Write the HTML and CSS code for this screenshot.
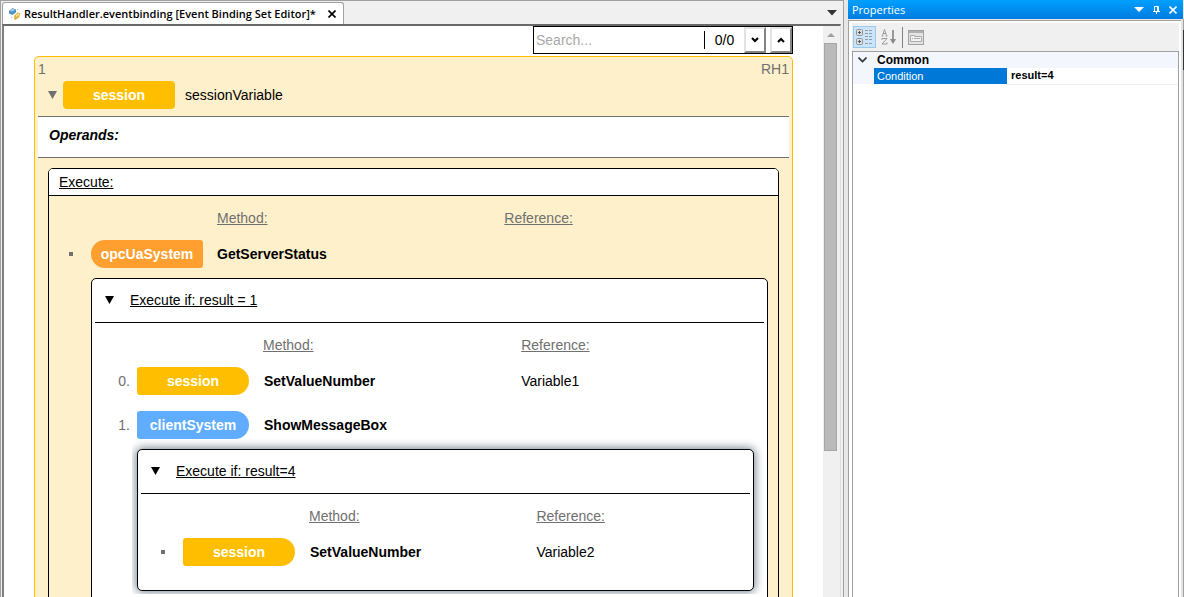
FILE: index.html
```html
<!DOCTYPE html>
<html lang="en">
<head>
<meta charset="utf-8">
<title>ResultHandler.eventbinding</title>
<link rel="stylesheet" href="styles.css">
</head>
<body>
<div class="workspace">
  <main class="editor">
    <div class="tabstrip">
      <div class="tab">
        <svg class="tab-icon" width="12" height="12" viewBox="0 0 12 12"><path d="M0 3l3.500-3L7 1.500v3L3.500 7 0 5.500z" fill="#4f93c9"/><path d="M1 2.500L3.500.5l2.500 1-2.500 2z" fill="#a9cdea"/><path d="M5.500 7l2-1V4.500l3.500.5-.5 4-4 3-1.500-1z" fill="#e3b23c"/><path d="M7 7l3-1.500v1.500L7 9z" fill="#fae69a"/><path d="M8 1l1 1M2 9l1 1" stroke="#b8b8b8"/></svg>
        <span class="tab-title">ResultHandler.eventbinding [Event Binding Set Editor]*</span>
        <button class="plain" aria-label="Close tab"><svg width="8" height="8" viewBox="0 0 8 8"><path d="M.5.5l7 7M7.500.5l-7 7" stroke="#000" stroke-width="1.600"/></svg></button>
      </div>
      <button class="plain tab-menu" aria-label="Open documents"><svg width="10" height="6" viewBox="0 0 10 6"><path d="M0 0h10L5 5.500z" fill="#333"/></svg></button>
    </div>
    <div class="viewport">
      <div class="canvas">
        <div class="search">
          <input class="search-box" type="text" placeholder="Search..." aria-label="Search">
          <span class="search-count">0/0</span>
          <button class="search-btn" aria-label="Next match"><svg width="8" height="6" viewBox="0 0 8 6"><path d="M1 1l3 3 3-3" fill="none" stroke="#000" stroke-width="2"/></svg></button>
          <button class="search-btn" aria-label="Previous match"><svg width="8" height="6" viewBox="0 0 8 6"><path d="M1 5l3-3 3 3" fill="none" stroke="#000" stroke-width="2"/></svg></button>
        </div>
        <section class="card">
          <div class="card-ids"><span>1</span><span>RH1</span></div>
          <div class="card-head">
            <svg width="9" height="8" viewBox="0 0 9 8"><path d="M0 0h9L4.500 8z" fill="#707070"/></svg>
            <span class="pill session">session</span>
            <span>sessionVariable</span>
          </div>
          <div class="operands">Operands:</div>
          <div class="box outer">
            <div class="outer-title"><span class="under">Execute:</span></div>
            <div class="grid outer-grid">
              <span class="label method">Method:</span><span class="label">Reference:</span>
              <span class="dot"></span><span class="pill opc">opcUaSystem</span><b class="name">GetServerStatus</b><span></span>
            </div>
            <div class="box inner">
              <div class="box-title"><svg width="9" height="8" viewBox="0 0 9 8"><path d="M0 0h9L4.500 8z"/></svg><span class="under">Execute if: result = 1</span></div>
              <div class="grid">
                <span class="label method">Method:</span><span class="label">Reference:</span>
                <span class="index">0.</span><span class="pill session right">session</span><b class="name">SetValueNumber</b><span>Variable1</span>
                <span class="index">1.</span><span class="pill client right">clientSystem</span><b class="name">ShowMessageBox</b><span></span>
              </div>
              <div class="selection">
                <div class="box selected">
                  <div class="box-title"><svg width="9" height="8" viewBox="0 0 9 8"><path d="M0 0h9L4.500 8z"/></svg><span class="under">Execute if: result=4</span></div>
                  <div class="grid">
                    <span class="label method">Method:</span><span class="label">Reference:</span>
                    <span class="dot"></span><span class="pill session right">session</span><b class="name">SetValueNumber</b><span>Variable2</span>
                  </div>
                </div>
              </div>
            </div>
          </div>
        </section>
      </div>
      <div class="scrollbar">
        <svg width="8" height="4" viewBox="0 0 8 4"><path d="M0 4l4-4 4 4z" fill="#a0a0a0"/></svg>
        <div class="thumb"></div>
      </div>
    </div>
  </main>
  <aside class="properties">
    <div class="titlebar">
      <span class="titlebar-text">Properties</span>
      <button class="plain" aria-label="Panel menu"><svg width="10" height="6" viewBox="0 0 10 6"><path d="M0 0h10L5 5z" fill="#fff"/></svg></button>
      <button class="plain" aria-label="Pin"><svg width="7" height="8" viewBox="0 0 7 8"><path d="M1.500 5V.5h4V5M0 5.500h7M3.500 5.500V8M4.500 1v4" fill="none" stroke="#fff"/></svg></button>
      <button class="plain" aria-label="Close"><svg width="8" height="8" viewBox="0 0 8 8"><path d="M.5.5l7 7M7.500.5l-7 7" stroke="#fff" stroke-width="1.600"/></svg></button>
    </div>
    <div class="panel">
      <div class="toolbar">
        <button class="tool active" aria-label="Categorized"><svg width="17" height="16" viewBox="0 0 17 16"><g fill="#ddd" stroke="#8b98a3"><rect x=".5" y=".5" width="6" height="6" rx="1"/><rect x=".5" y="9.500" width="6" height="6" rx="1"/></g><path d="M2 3.500h3M3.500 2v3M2 12.500h3M3.500 11v3" stroke="#555"/><path d="M9 1.500h3M13 1.500h3M9 4.500h3M13 4.500h3M9 7.500h3M13 7.500h3M9 10.500h3M13 10.500h3M9 14.500h3M13 14.500h3" stroke="#929da6"/></svg></button>
        <button class="tool" aria-label="Alphabetical"><svg width="16" height="16" viewBox="0 0 16 16"><path d="M.5 7h2M4.500 7h2M1.500 6.500l2-6 2 6M2 4.500h3M1 11V9.500h5L1 15h5v-1.500" fill="none" stroke="#9a9a9a"/><path d="M12 1v11" stroke="#999" stroke-width="2"/><path d="M9 10l3 5 3-5z" fill="#888"/></svg></button>
        <span class="tool-rule"></span>
        <button class="tool" aria-label="Property pages"><svg width="16" height="15" viewBox="0 0 16 15"><rect x=".5" y=".5" width="15" height="14" fill="#e4e4e4" stroke="#a0a0a0"/><path d="M1 2h14" stroke="#b0b0b0" stroke-width="2"/><path d="M2.500 11.500v-6h4v1h7v5z" fill="#f3f3f3" stroke="#aaa"/><path d="M4 8.500h1M6 8.500h6" stroke="#aaa"/></svg></button>
      </div>
      <div class="sheet">
        <table class="props">
          <colgroup><col class="col-gutter"><col class="col-key"><col></colgroup>
          <tr class="group"><td class="gutter"><svg width="9" height="6" viewBox="0 0 9 6"><path d="M.5.5l4 4 4-4" fill="none" stroke="#333" stroke-width="1.600"/></svg></td><th colspan="2" scope="colgroup">Common</th></tr>
          <tr class="prop"><td class="gutter"></td><th class="key" scope="row">Condition</th><td class="value">result=4</td></tr>
        </table>
      </div>
    </div>
    <div class="edge"></div>
  </aside>
</div>
</body>
</html>
```

FILE: styles.css
```css
* { box-sizing: border-box; }
body { margin: 0; background: #e7e7e7; color: #000; font: 14px/20px "Liberation Sans", Arial, sans-serif; }
svg { display: block; flex: none; }
button, input { font: inherit; color: inherit; margin: 0; }
.plain { border: 0; padding: 0; background: none; }
.workspace { display: flex; height: 100vh; overflow: hidden; gap: 4px; }

.editor { flex: 1; min-width: 0; display: flex; flex-direction: column; background: #f0f0f0; border: 1px solid #a0a0a0; border-bottom: 0; }
.tabstrip { display: flex; justify-content: space-between; align-items: center; height: 23px; padding: 1px 6px 0 1px; }
.tab { display: flex; align-items: center; align-self: stretch; gap: 3px; padding: 0 7px 0 6px; background: #fff; border: 1px solid #a0a0a0; border-bottom: 0; border-radius: 3px 3px 0 0; }
.tab-title { font: 600 11px/16px "Open Sans", "Noto Sans", sans-serif; white-space: nowrap; margin-right: 9px; }
.viewport { flex: 1; min-height: 0; display: flex; margin: 0 2px 0 1px; border: 1px solid #a0a0a0; border-top: 2px solid #696969; border-left: 2px solid #808080; border-bottom: 0; border-right-color: #dfdfdf; background: #fff; }
.canvas { flex: 1; min-width: 0; overflow: hidden; padding: 0 30px; }
.scrollbar { width: 17px; background: #f0f0f0; display: flex; flex-direction: column; align-items: center; gap: 6px; padding: 7px 2px 0 0; }
.thumb { width: 13px; height: 408px; background: #bababa; border: 1px solid #a6a6a6; }

.search { display: flex; align-items: center; width: 260px; height: 28px; margin: 0 0 2px auto; border: 1px solid #000; }
.search-box { flex: 1; min-width: 0; height: 18px; padding: 0 2px; border: 0; border-right: 1px solid #000; background: #fff; outline: 0; }
.search-box::placeholder { color: #a9a9a9; }
.search-count { width: 39px; text-align: center; }
.search-btn { display: flex; align-items: center; justify-content: center; width: 22px; height: 26px; padding: 0; background: #fff; border: 2px solid; border-color: #e3e3e3 #858585 #858585 #e3e3e3; }
.search-btn + .search-btn { margin-left: 4px; }

.card { background: #fff0cc; border: 1px solid #ffbf00; border-radius: 5px 5px 0 0; padding: 0 3px 60px; }
.card-ids { display: flex; justify-content: space-between; height: 24px; padding-top: 2px; color: #707070; }
.card-head { display: flex; align-items: center; gap: 10px; padding: 0 10px 7px; }
.card-head .pill { margin-left: -4px; }
.operands { padding: 8px 11px 12px; background: #fff; border: solid #707070; border-width: 1px 0; font-weight: bold; font-style: italic; }
.box { border: 1px solid #000; border-radius: 5px; }
.outer { margin: 10px 10px 0; padding-bottom: 60px; }
.outer-title { padding: 3px 10px; background: #fff; border-bottom: 1px solid #000; border-radius: 4px 4px 0 0; }
.under { text-decoration: underline; }
.pill { width: 112px; height: 28px; border-radius: 4px; color: #fff; font-weight: bold; line-height: 28px; text-align: center; }
.session { background: #ffbf00; }
.opc { background: #fe9f2f; border-radius: 14px 3px 3px 14px; }
.client { background: #60adff; }
.right { border-radius: 3px 14px 14px 3px; }

.grid { display: grid; grid-template-columns: 45px 126px minmax(0, 21fr) minmax(0, 20fr); align-items: center; row-gap: 16px; padding: 8px 0 10px; }
.outer-grid { grid-template-columns: 42px 126px minmax(0, 21fr) minmax(0, 20fr); }
.label { color: #707070; text-decoration: underline; line-height: 28px; margin-bottom: -8px; }
.method { grid-column: 3; }
.dot { width: 4px; height: 4px; background: #707070; margin-left: 20px; }
.selected .dot { margin-left: 23px; }
.index { color: #707070; text-align: right; padding-right: 7px; }
.inner .name { padding-left: 1px; }
.inner { margin: 0 10px 0 42px; padding-bottom: 40px; background: #fff; }
.box-title { display: flex; align-items: center; gap: 16px; height: 44px; margin: 0 3px; padding: 0 10px 2px; border-bottom: 1px solid #000; }
.selection { margin: -10px 3px 0 40px; padding: 10px 10px 3px 5px; overflow: hidden; }
.selected { background: #fff; padding-bottom: 14px; box-shadow: 0 0 10px 1px #70808f; }

.properties { width: 336px; display: grid; grid-template-columns: minmax(0, 1fr) 3px; grid-template-rows: 19px minmax(0, 1fr); }
.titlebar { grid-column: 1 / 3; display: flex; align-items: center; gap: 9px; margin-right: 1px; padding: 0 6px 0 4px; background: linear-gradient(#00a0ff, #007be0); color: #fff; }
.titlebar-text { flex: 1; font: 11px/18px "Open Sans", "Noto Sans", sans-serif; }
.panel { grid-column: 1; display: flex; flex-direction: column; margin-top: 1px; padding: 1px 2px 0 3px; background: #fff; border: 1px solid #a0a0a0; border-width: 1px 0 0 1px; }
.toolbar { display: flex; align-items: center; gap: 1px; height: 28px; margin-top: 1px; padding: 1px; background: #f0f0f0; }
.tool { display: flex; align-items: center; justify-content: center; width: 23px; height: 22px; padding: 0; border: 1px solid transparent; background: none; }
.active { background: #cce4f7; border-color: #99c9ef; }
.tool-rule { width: 1px; height: 21px; margin-left: 1px; background: #808080; }
.sheet { flex: 1; background: #fff; border: 1px solid #a0a0a0; border-bottom: 0; }
.props { width: 100%; border-collapse: collapse; table-layout: fixed; font-size: 11px; line-height: 15px; }
.props th, .props td { padding: 0 3px; text-align: left; height: 16px; }
.col-gutter { width: 21px; }
.col-key { width: 133px; }
.group, .props .gutter { background: #f3f6fc; }
.props .gutter { padding-left: 5px; }
.props .key { background: #0078d7; color: #fff; font-weight: normal; }
.value { font-weight: bold; border-bottom: 1px solid #f0f0f0; }
.props .value { padding-left: 4px; }
.group th { font-size: 12px; }
.edge { grid-column: 2; background: linear-gradient(#333, #333) 100% 11px / 1px 40px no-repeat, linear-gradient(90deg, #e3e3e3 66%, #a0a0a0 66%); }
```
